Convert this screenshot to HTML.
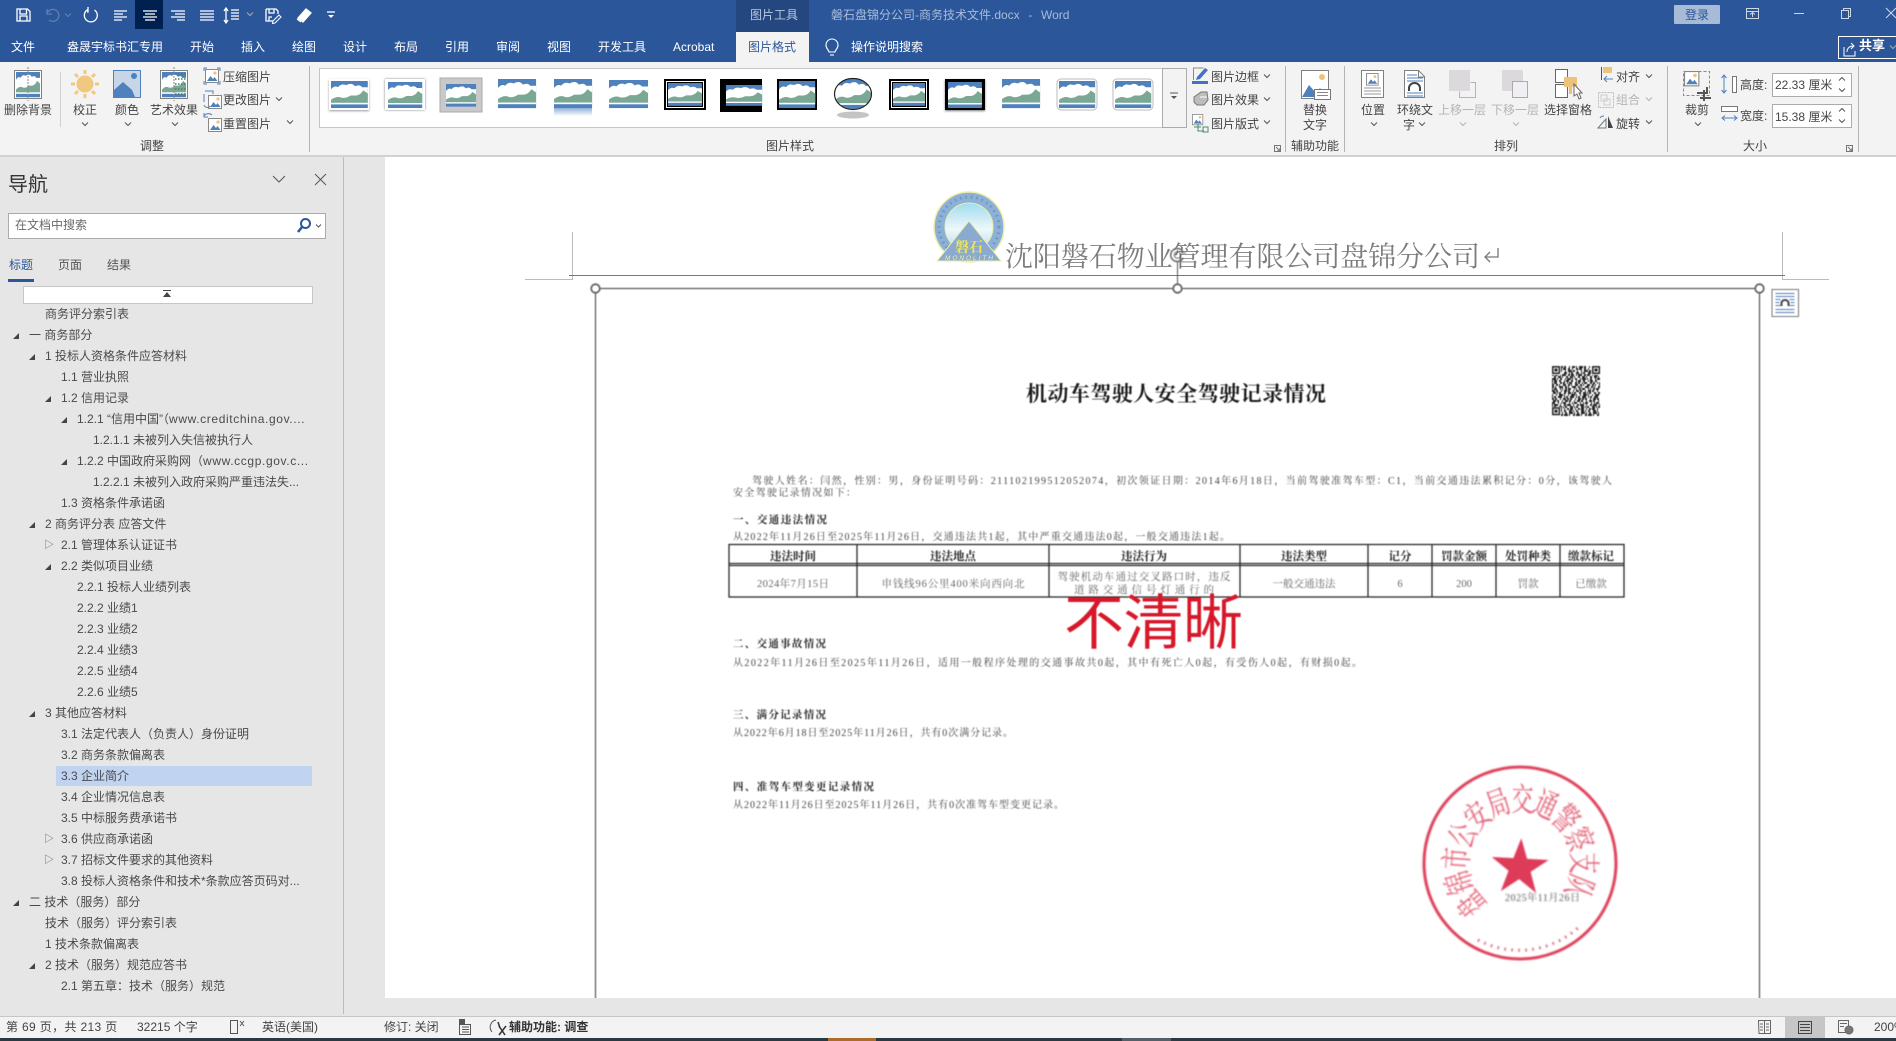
<!DOCTYPE html>
<html lang="zh-CN"><head><meta charset="utf-8"><title>磐石盘锦分公司-商务技术文件.docx - Word</title>
<style>
html,body{margin:0;padding:0;width:1896px;height:1041px;overflow:hidden;background:#e6e6e6}
body{position:relative;font:12px/16px "Liberation Sans","Noto Sans CJK SC",sans-serif;color:#444}
.a,.t{position:absolute}
.t{white-space:nowrap}
.w{color:#fff}.g{color:#b4b4b4}
svg{position:absolute;left:0;top:0;overflow:hidden}
#tree{position:absolute;left:0;top:306px;width:340px}
.r{position:relative;height:21px;line-height:16px;white-space:nowrap;color:#4a4a4a}
.r i{font-style:normal;letter-spacing:.62px}
.r.c:before{content:"";position:absolute;top:6px;margin-left:-16px;width:0;height:0;border-style:solid;border-width:0 0 6px 6px;border-color:transparent transparent #444 transparent}
.r.o:before{content:"▷";position:absolute;margin-left:-17px;top:1px;font-size:10px;color:#666}
</style></head><body>
<svg width="0" height="0" style="position:absolute"><defs>
<g id="th"><rect width="32" height="26" fill="#4f81bd"/><path d="M0 8Q3 4 6 6Q9 2 13 4Q18 1 21 5Q25 3 27 6L32 6V21H0Z" fill="#fff"/><path d="M0 21V18Q5 14 9 16Q13 17 17 14L22 14Q26 13 28 9L32 12V21Z" fill="#7aa895"/><rect y="21" width="32" height="1.5" fill="#fff"/></g>
<g id="ch"><path d="M-3-1.5l3 3 3-3" fill="none" stroke="#555" stroke-width="1"/></g>
<g id="pic"><rect x=".5" y=".5" width="13" height="13" fill="#fff" stroke="#888"/><path d="M2 12l3.5-5 2.5 3 1.5-2 3 4z" fill="#4f81bd"/><circle cx="10" cy="4" r="1.6" fill="#edc27a"/></g>
<g id="sp"><path d="M-3 1.5l3-3 3 3" fill="none" stroke="#555"/><path d="M-3 9.5l3 3 3-3" fill="none" stroke="#555"/></g>
<linearGradient id="refl" x1="0" y1="0" x2="0" y2="1"><stop offset="0" stop-color="#8fb0d6"/><stop offset="1" stop-color="#fff"/></linearGradient>
</defs></svg>

<header>
<div class="a" style="left:0;top:0;width:1896px;height:62px;background:#2b579a"></div>
<div class="a" style="left:135px;top:0;width:28px;height:29px;background:#002050"></div>
<div class="a" style="left:736px;top:0;width:73px;height:32px;background:#24477f"></div>
<div class="a" style="left:736px;top:32px;width:73px;height:30px;background:#f3f3f3"></div>
<div class="a" style="left:0;top:62px;width:1896px;height:93px;background:#f3f3f3;border-bottom:2px solid #d2d2d2"></div>
<span class="t" style="left:750px;top:7px;color:#b9c8de">图片工具</span>
<span class="t" style="left:831px;top:7px;color:#a9bcd9;word-spacing:1px">磐石盘锦分公司-商务技术文件.docx &nbsp;-&nbsp; Word</span>
<span class="t" style="left:1674px;top:5px;width:46px;height:19px;background:#a7bad6;border-radius:1px;text-align:center;line-height:20px;color:#2b579a">登录</span>

<span class="t w" style="left:11px;top:39px">文件</span><span class="t w" style="left:67px;top:39px">盎晟宇标书汇专用</span><span class="t w" style="left:190px;top:39px">开始</span><span class="t w" style="left:241px;top:39px">插入</span><span class="t w" style="left:292px;top:39px">绘图</span><span class="t w" style="left:343px;top:39px">设计</span><span class="t w" style="left:394px;top:39px">布局</span><span class="t w" style="left:445px;top:39px">引用</span><span class="t w" style="left:496px;top:39px">审阅</span><span class="t w" style="left:547px;top:39px">视图</span><span class="t w" style="left:598px;top:39px">开发工具</span><span class="t w" style="left:673px;top:39px">Acrobat</span>
<span class="t" style="left:748px;top:39px;color:#2b579a">图片格式</span>
<span class="t w" style="left:851px;top:39px">操作说明搜索</span>
<div class="a" style="left:1838px;top:36px;width:60px;height:21px;border:1px solid #fff"></div>
<span class="t w" style="left:1859px;top:38px;font-size:13px;font-weight:bold">共享</span>

<!-- gallery frame -->
<div class="a" style="left:319px;top:68px;width:843px;height:58px;background:#fff;border:1px solid #c6c6c6;border-right:0"></div>
<div class="a" style="left:1162px;top:68px;width:23px;height:58px;background:#f3f3f3;border:1px solid #ababab"></div>

<!-- ribbon labels -->
<div class="a" style="left:0;top:1px">
<span class="t" style="left:4px;top:101px">删除背景</span><span class="t" style="left:73px;top:101px">校正</span><span class="t" style="left:115px;top:101px">颜色</span><span class="t" style="left:150px;top:101px">艺术效果</span>
<span class="t" style="left:223px;top:68px">压缩图片</span><span class="t" style="left:223px;top:91px">更改图片</span><span class="t" style="left:223px;top:115px">重置图片</span>
<span class="t" style="left:140px;top:137px">调整</span>
<span class="t" style="left:766px;top:137px">图片样式</span>
<span class="t" style="left:1211px;top:68px">图片边框</span><span class="t" style="left:1211px;top:91px">图片效果</span><span class="t" style="left:1211px;top:115px">图片版式</span>
<span class="t" style="left:1303px;top:101px">替换</span><span class="t" style="left:1303px;top:116px">文字</span><span class="t" style="left:1291px;top:137px">辅助功能</span>
<span class="t" style="left:1361px;top:101px">位置</span><span class="t" style="left:1397px;top:101px">环绕文</span><span class="t" style="left:1403px;top:116px">字</span>
<span class="t g" style="left:1438px;top:101px">上移一层</span><span class="t g" style="left:1491px;top:101px">下移一层</span><span class="t" style="left:1544px;top:101px">选择窗格</span>
<span class="t" style="left:1616px;top:68px">对齐</span><span class="t g" style="left:1616px;top:91px">组合</span><span class="t" style="left:1616px;top:115px">旋转</span>
<span class="t" style="left:1494px;top:137px">排列</span>
<span class="t" style="left:1685px;top:101px">裁剪</span>
<span class="t" style="left:1740px;top:76px">高度:</span><span class="t" style="left:1740px;top:107px">宽度:</span>
<span class="t" style="left:1743px;top:137px">大小</span>
</div>
<div class="a" style="left:1772px;top:73px;width:78px;height:22px;background:#fff;border:1px solid #ababab"></div>
<div class="a" style="left:1772px;top:104px;width:78px;height:22px;background:#fff;border:1px solid #ababab"></div>
<span class="t" style="left:1775px;top:77px;color:#444">22.33 厘米</span><span class="t" style="left:1775px;top:109px;color:#444">15.38 厘米</span>

<svg width="1896" height="158" viewBox="0 0 1896 158">
<!-- QAT -->
<g fill="none" stroke="#fff" stroke-width="1.3">
<path d="M17 9h10.5l2.5 2.5V21H17zM20 9v5h6.500V9M20 21v-5h7v5"/>
<path d="M47 9v5h5M47 14a6 6 0 1 1 2 6" stroke="#5f80b3"/>
<path d="M94.500 10a6.500 6.500 0 1 1-6.500-.5M88 7v5h-1" />
<path d="M114 11h13M114 14h9M114 17h13M114 20h8M143 11h14M145 14h10M143 17h14M145 20h10M171 11h14M175 14h10M171 17h14M177 20h8M200 11h14M200 14h14M200 17h14M200 20h14M226 9v13M224 11l2-3 2 3M224 20l2 3 2-3M231 10h8M231 13h8M231 16h8M231 19h8"/>
<path d="M266 9h10l2 2v3M266 9v12h7M269 9v4h5V9M269 21v-4h3"/><path d="M273 21l6-6 2 2-6 6-2.500.500z" stroke-width="1"/>
<path d="M298 18l8-9 5 4-8 9z" fill="#fff"/><path d="M297 19l4 3" />
<path d="M327 12h8" /></g>
<path d="M328 15h6l-3 3z" fill="#fff"/>
<use href="#ch" x="68" y="15" opacity=".5" style="filter:invert(1)"/>
<use href="#ch" x="250" y="14" style="filter:invert(1)"/>
<!-- window controls -->
<g fill="none" stroke="#cdd7e6" stroke-width="1"><path d="M1746.500 8.500h12v10h-12zM1746.500 11.500h12M1752.500 17v-4M1750 14.500l2.500-2 2.500 2"/><path d="M1794 13.500h10"/><path d="M1841.500 10.500h7v8h-7zM1843.500 10V8.500h7v8h-2"/><path d="M1886 8l10 10M1896 8l-10 10"/></g>
<g fill="none" stroke="#fff" stroke-width="1"><path d="M1844 47v9h11v-5M1847 52c0-4 3-6 6-6M1851 43l3 3-3 3"/></g><use href="#ch" x="1893" y="47" style="filter:invert(1)"/>
<!-- lightbulb -->
<g fill="none" stroke="#fff" stroke-width="1.100"><path d="M829 52c0-2-3-3-3-7a6 6 0 0 1 12 0c0 4-3 5-3 7z"/><path d="M830 55h4"/></g>
<!-- separators -->
<path d="M60.500 72v55" stroke="#d0d0d0"/><path d="M309.500 66v86M1285.500 66v86M1344.500 66v86M1667.500 66v86M1858.500 66v86" stroke="#b4b4b4"/>
<!-- 删除背景 -->
<rect x="14.500" y="70.500" width="27" height="28" fill="#fff" stroke="#808080"/><use href="#th" transform="translate(16 72) scale(.75 .97)"/><path d="M28 67v34" stroke="#888" stroke-dasharray="2 1"/>
<!-- 校正 -->
<circle cx="85" cy="84" r="8.500" fill="#f0c87f"/><g stroke="#f0c87f" stroke-width="3"><path d="M85 70v4M85 94v4M71 84h4M95 84h4M75 74l3 3M92 91l3 3M95 74l-3 3M78 91l-3 3"/></g>
<!-- 颜色 -->
<rect x="113.500" y="70.500" width="27" height="27" fill="#c6d6e8" stroke="#4f81bd"/><path d="M114 97V90l9-8 9 8 3 7z" fill="#4f81bd"/><circle cx="134" cy="76" r="3" fill="#4f81bd"/>
<!-- 艺术效果 -->
<rect x="160.500" y="70.500" width="27" height="28" fill="#fff" stroke="#808080"/><use href="#th" transform="translate(162 72) scale(.75 .97)"/><g stroke="#4a7c64" stroke-width="1.500" stroke-dasharray="1.500 1.500"><path d="M175 74h11M175 79h11M175 84h11M175 89h11M175 94h11"/></g><path d="M174 67v34" stroke="#888" stroke-dasharray="2 1"/>
<!-- small col -->
<use href="#pic" x="205" y="69"/><g stroke="#4f81bd" fill="none"><path d="M204 71v-3h3M217 68h3v3M204 81v3h3M220 81v3h-3"/></g>
<use href="#pic" x="208" y="95"/><path d="M205 91h8v3M204 94v8M204 105c1 3 5 3 6 1" fill="none" stroke="#4f81bd"/>
<use href="#pic" x="208" y="118"/><path d="M204 116c2-3 6-3 8-1M204 113v4h4" fill="none" stroke="#4f81bd"/>
<use href="#ch" x="279" y="99"/><use href="#ch" x="290" y="122"/><use href="#ch" x="85" y="124"/><use href="#ch" x="128" y="124"/><use href="#ch" x="175" y="124"/>
<!-- gallery -->
<g>
<rect x="329" y="79" width="40" height="31" fill="#fff" style="filter:drop-shadow(0 1px 1px #999)"/><use href="#th" transform="translate(331 81) scale(1.150 1.040)"/>
<rect x="385" y="79" width="40" height="31" fill="#fff" style="filter:drop-shadow(0 0 1px #777)"/><use href="#th" transform="translate(388 82) scale(1.070 1)"/>
<rect x="440" y="78" width="42" height="34" fill="#c9c9c9" stroke="#aaa"/><use href="#th" transform="translate(446 84) scale(.94 .87)"/>
<use href="#th" transform="translate(498 79) scale(1.190 1.120)"/>
<use href="#th" transform="translate(554 79) scale(1.190 1.120)"/><rect x="554" y="108" width="38" height="8" fill="url(#refl)"/>
<use href="#th" transform="translate(609 80) scale(1.220 1.080)"/>
<rect x="664" y="79" width="42" height="31" fill="#000"/><rect x="666" y="81" width="38" height="27" fill="#fff"/><rect x="667" y="82" width="36" height="25" fill="#000"/><use href="#th" transform="translate(668 83) scale(1.060 .88)"/>
<rect x="720" y="79" width="42" height="33" fill="#000"/><use href="#th" transform="translate(726 85) scale(1.130 .8)"/>
<rect x="777" y="79" width="40" height="31" fill="#000"/><use href="#th" transform="translate(779 81) scale(1.130 1.040)"/>
<use href="#th" transform="translate(835 79) scale(1.130 1.150)"/>
<path d="M833 78h40v31h-40zM835 94a18 15 0 0 0 36 0a18 15 0 0 0-36 0z" fill="#fff" fill-rule="evenodd"/><ellipse cx="853" cy="94" rx="18.500" ry="15.500" fill="none" stroke="#222" stroke-width="1.200"/>
<ellipse cx="853" cy="115" rx="16" ry="3.500" fill="#c4c4c4"/>
<rect x="889" y="79" width="40" height="31" fill="#000"/><rect x="891" y="81" width="36" height="27" fill="#fff"/><rect x="892" y="82" width="34" height="25" fill="#000"/><use href="#th" transform="translate(893 83) scale(1 .88)"/>
<rect x="945" y="79" width="40" height="31" fill="#000" style="filter:drop-shadow(0 1px 1px #777)"/><use href="#th" transform="translate(948 82) scale(1.060 1)"/>
<use href="#th" transform="translate(1002 79) scale(1.190 1.120)"/>
<rect x="1057" y="79" width="40" height="31" rx="4" fill="#fff" stroke="#bbb"/><use href="#th" transform="translate(1059 81) scale(1.130 1.040)"/>
<rect x="1113" y="79" width="40" height="31" rx="4" fill="#fff" stroke="#bbb"/><use href="#th" transform="translate(1115 81) scale(1.130 1.040)"/>
</g>
<path d="M1170 93h8" stroke="#555"/><path d="M1171 96h6l-3 3z" fill="#555"/>
<!-- 图片边框/效果/版式 -->
<path d="M1193.500 80v-12h10" fill="none" stroke="#888"/><path d="M1197 77l8-9 3 2-8 9-4 1z" fill="#4472c4"/><rect x="1192" y="81" width="16" height="3" fill="#4472c4"/>
<path d="M1194 97l7-5h6l1 8-4 5h-7l-3-3z" fill="#bdbdbd" stroke="#777"/><path d="M1200 97h7" stroke="#fff"/>
<use href="#pic" transform="translate(1192 114) scale(.8)"/><path d="M1194 127h7M1198 124v7h6M1203 127h5v5h-5z" fill="none" stroke="#4c8a72"/>
<use href="#ch" x="1267" y="76"/><use href="#ch" x="1267" y="99"/><use href="#ch" x="1267" y="122"/>
<!-- launchers -->
<g fill="none" stroke="#777"><path d="M1274.500 145.500h6v6h-6zM1276 147l4 4M1280 148v3h-3"/><path d="M1846.500 145.500h6v6h-6zM1848 147l4 4M1852 148v3h-3"/></g>
<!-- 替换文字 -->
<rect x="1301.500" y="70.500" width="27" height="28" fill="#fff" stroke="#808080"/><circle cx="1322" cy="77" r="3" fill="#edc27a"/><path d="M1302 97l7-12 7 8 4-5 7 9z" fill="#4f81bd"/><rect x="1314.500" y="89.500" width="16" height="10" fill="#fff" stroke="#777"/><path d="M1317 92.500h11M1317 95.500h11" stroke="#888"/>
<!-- 位置 -->
<rect x="1361.500" y="70.500" width="22" height="27" fill="#fff" stroke="#808080"/><use href="#pic" transform="translate(1366 73) scale(.9)"/><path d="M1364 88h17M1364 91h17M1364 94h17" stroke="#999"/>
<!-- 环绕文字 -->
<path d="M1404.500 70.500h14l6 6v21h-20z" fill="#fff" stroke="#808080"/><path d="M1418.500 71v6h6" fill="none" stroke="#808080"/><path d="M1407 75h10M1407 78h16M1407 81h16M1407 93h16M1407 96h16" stroke="#4f81bd"/><path d="M1409 91v-3a5.500 5 0 0 1 11 0v3" fill="none" stroke="#444" stroke-width="2"/>
<use href="#ch" x="1374" y="124"/><use href="#ch" x="1422" y="124"/>
<!-- 上下移 -->
<rect x="1449" y="70" width="21" height="21" fill="#dcd9dc"/><path d="M1470.500 82.500h5v15h-16v-6" fill="none" stroke="#b4b4b4"/>
<rect x="1502" y="70" width="21" height="21" fill="#dcd9dc"/><rect x="1512.500" y="81.500" width="15" height="16" fill="#f1eff3" stroke="#aaa"/>
<use href="#ch" x="1463" y="124" opacity=".4"/><use href="#ch" x="1516" y="124" opacity=".4"/>
<!-- 选择窗格 -->
<rect x="1555.500" y="69.500" width="12" height="13" fill="#fff" stroke="#666"/><rect x="1555.500" y="84.500" width="12" height="13" fill="#fff" stroke="#666"/><path d="M1564 77h13v10h-5v7h-3v-7h-5z" fill="#edc27a"/><path d="M1574 84v12l3-2 2 5 2-1-2-5h3z" fill="#fff" stroke="#666"/>
<!-- 对齐 组合 旋转 -->
<path d="M1601.500 67v13" stroke="#555"/><rect x="1603" y="67" width="9" height="6" fill="#edc27a"/><path d="M1613 79h-8M1607 76l-3 3 3 3" fill="none" stroke="#4f81bd"/>
<g fill="none" stroke="#bbb" stroke-dasharray="2 1"><rect x="1598.500" y="92.500" width="15" height="15"/></g><rect x="1601" y="95" width="6" height="6" fill="none" stroke="#ccc"/><rect x="1604" y="99" width="6" height="6" fill="none" stroke="#ccc"/>
<path d="M1598 128l8-9v9z" fill="none" stroke="#777"/><path d="M1608 128v-12l5 12z" fill="#444"/><path d="M1600 118c1-2 3-2 4-2" fill="none" stroke="#4f81bd"/>
<use href="#ch" x="1649" y="76"/><use href="#ch" x="1649" y="99" opacity=".4"/><use href="#ch" x="1649" y="122"/>
<!-- 裁剪 -->
<rect x="1683.500" y="71.500" width="26" height="24" fill="none" stroke="#888" stroke-dasharray="3 2"/><use href="#pic" transform="translate(1684 71) scale(1.100)"/><path d="M1700 98h11M1704 90v11M1697 93h10v-6" fill="none" stroke="#555" stroke-width="2"/>
<use href="#ch" x="1698" y="124"/>
<!-- 高度宽度 -->
<rect x="1732.500" y="76.500" width="4" height="16" fill="#fff" stroke="#777"/><path d="M1724 76v16M1721.500 78l2.500-3 2.500 3M1721.500 90l2.500 3 2.500-3" fill="none" stroke="#4f81bd"/>
<path d="M1721.500 106.500h16v5h-16z" fill="#fff" stroke="#777"/><path d="M1723 118h13M1725 115.500l-3 2.500 3 2.500M1734 115.500l3 2.500-3 2.500" fill="none" stroke="#4f81bd"/>
<use href="#sp" x="1842" y="79"/><use href="#sp" x="1842" y="110"/>
</svg>
</header>

<nav>
<div class="a" style="left:343px;top:157px;width:1px;height:857px;background:#bcbcbc"></div>
<span class="t" style="left:8px;top:171px;font-size:20px;line-height:28px;color:#333">导航</span>
<svg style="left:260px;top:170px" width="80" height="22"><path d="M13 6l6 6 6-6M55 4l11 11M66 4L55 15" fill="none" stroke="#555"/></svg>
<div class="a" style="left:8px;top:213px;width:316px;height:24px;background:#fff;border:1px solid #ababab"></div>
<span class="t" style="left:15px;top:217px;color:#6a6a6a">在文档中搜索</span>
<svg style="left:296px;top:216px" width="30" height="20"><circle cx="9.500" cy="7.500" r="4.500" fill="none" stroke="#2b579a" stroke-width="2"/><path d="M6 11l-4 5" stroke="#2b579a" stroke-width="2.500"/><path d="M20 8.500l2.500 2.500 2.500-2.500" fill="none" stroke="#555"/></svg>
<span class="t" style="left:9px;top:257px;color:#2b579a">标题</span><span class="t" style="left:58px;top:257px;color:#555">页面</span><span class="t" style="left:107px;top:257px;color:#555">结果</span>
<div class="a" style="left:8px;top:279px;width:26px;height:3px;background:#2b579a"></div>
<div class="a" style="left:23px;top:286px;width:288px;height:16px;background:#fff;border:1px solid #c6c6c6"></div>
<svg style="left:163px;top:290px" width="9" height="9"><path d="M0 .5h8" stroke="#444"/><path d="M4 2L0 7h8z" fill="#444"/></svg>
<div class="a" style="left:56px;top:766px;width:256px;height:20px;background:#c0d4f1"></div>
<div id="tree">
<div class="r" style="padding-left:45px">商务评分索引表</div>
<div class="r c" style="padding-left:29px">一 商务部分</div>
<div class="r c" style="padding-left:45px">1 投标人资格条件应答材料</div>
<div class="r" style="padding-left:61px">1.1 营业执照</div>
<div class="r c" style="padding-left:61px">1.2 信用记录</div>
<div class="r c" style="padding-left:77px">1.2.1 “信用中国”（<i>www.creditchina.gov....</i></div>
<div class="r" style="padding-left:93px">1.2.1.1 未被列入失信被执行人</div>
<div class="r c" style="padding-left:77px">1.2.2 中国政府采购网（<i>www.ccgp.gov.c...</i></div>
<div class="r" style="padding-left:93px">1.2.2.1 未被列入政府采购严重违法失...</div>
<div class="r" style="padding-left:61px">1.3 资格条件承诺函</div>
<div class="r c" style="padding-left:45px">2 商务评分表 应答文件</div>
<div class="r o" style="padding-left:61px">2.1 管理体系认证证书</div>
<div class="r c" style="padding-left:61px">2.2 类似项目业绩</div>
<div class="r" style="padding-left:77px">2.2.1 投标人业绩列表</div>
<div class="r" style="padding-left:77px">2.2.2 业绩1</div>
<div class="r" style="padding-left:77px">2.2.3 业绩2</div>
<div class="r" style="padding-left:77px">2.2.4 业绩3</div>
<div class="r" style="padding-left:77px">2.2.5 业绩4</div>
<div class="r" style="padding-left:77px">2.2.6 业绩5</div>
<div class="r c" style="padding-left:45px">3 其他应答材料</div>
<div class="r" style="padding-left:61px">3.1 法定代表人（负责人）身份证明</div>
<div class="r" style="padding-left:61px">3.2 商务条款偏离表</div>
<div class="r" style="padding-left:61px">3.3 企业简介</div>
<div class="r" style="padding-left:61px">3.4 企业情况信息表</div>
<div class="r" style="padding-left:61px">3.5 中标服务费承诺书</div>
<div class="r o" style="padding-left:61px">3.6 供应商承诺函</div>
<div class="r o" style="padding-left:61px">3.7 招标文件要求的其他资料</div>
<div class="r" style="padding-left:61px">3.8 投标人资格条件和技术*条款应答页码对...</div>
<div class="r c" style="padding-left:29px">二 技术（服务）部分</div>
<div class="r" style="padding-left:45px">技术（服务）评分索引表</div>
<div class="r" style="padding-left:45px">1 技术条款偏离表</div>
<div class="r c" style="padding-left:45px">2 技术（服务）规范应答书</div>
<div class="r" style="padding-left:61px">2.1 第五章：技术（服务）规范</div>
</div>
</nav>

<main class="a" style="left:385px;top:157px;width:1511px;height:841px;background:#fff;overflow:hidden">
<svg width="1511" height="841" viewBox="385 157 1511 841" style="font-family:'Liberation Serif','Noto Serif CJK SC',serif">
<defs>
<linearGradient id="sky" x1="0" y1="0" x2="0" y2="1"><stop offset="0" stop-color="#9fdcef"/><stop offset=".55" stop-color="#eef8fb"/><stop offset="1" stop-color="#b7d8ee"/></linearGradient>
</defs>
<!-- crop marks -->
<path d="M572.500 232v47.500H525M1782.500 232v47.500H1829" fill="none" stroke="#bbb"/>
<path d="M569 275.500H1785" stroke="#777"/>
<!-- logo -->
<g style="filter:blur(.3px)">
<circle cx="969" cy="227" r="35" fill="#8cb0d6" stroke="#f2efa6" stroke-width="1.500"/>
<circle cx="969" cy="227" r="24" fill="url(#sky)" stroke="#e8eeb0"/>
<circle cx="969" cy="227" r="30" fill="none" stroke="#6f94c0" stroke-width="3" stroke-dasharray="1.500 4"/>
<path d="M969 221l32 40h-64z" fill="#8aaad0" stroke="#f2efa6"/>
<text x="969" y="252" text-anchor="middle" font-size="14" font-weight="bold" fill="#f4e84e">磐石</text>
<text x="969" y="260" text-anchor="middle" font-size="6.500" fill="#f2efa6" font-family="Liberation Sans" font-style="italic" textLength="48">MONOLITH</text>
</g>
<text x="1005" y="266" font-size="28" fill="#7d7d7d" textLength="475">沈阳磐石物业管理有限公司盘锦分公司</text>
<path d="M1498 248v9h-13M1490 252l-5 5 5 5" fill="none" stroke="#777" stroke-width="1.300"/>
<!-- image content -->
<g style="filter:blur(.4px)" fill="#444">
<text x="1026" y="401" font-size="21" font-weight="bold" fill="#1a1a1a" textLength="300">机动车驾驶人安全驾驶记录情况</text>
<text x="752" y="484" font-size="10" textLength="860">驾驶人姓名：闫然，性别：男，身份证明号码：211102199512052074，初次领证日期：2014年6月18日，当前驾驶准驾车型：C1，当前交通违法累积记分：0分，该驾驶人</text>
<text x="733" y="496" font-size="10" textLength="123">安全驾驶记录情况如下：</text>
<text x="733" y="523" font-size="10.500" font-weight="bold" fill="#222" textLength="94">一、交通违法情况</text>
<text x="733" y="540" font-size="10" textLength="497">从2022年11月26日至2025年11月26日，交通违法共1起，其中严重交通违法0起，一般交通违法1起。</text>
<g fill="none" stroke="#2a2a2a" stroke-width="1.300"><rect x="729" y="544.500" width="895" height="52.500"/><path d="M729 563.500h895M729 565.500h895M857 544v53M1049 544v53M1240 544v53M1368 544v53M1432 544v53M1496 544v53M1560 544v53"/></g>
<g font-size="11.500" font-weight="bold" fill="#222" text-anchor="middle"><text x="793" y="560">违法时间</text><text x="953" y="560">违法地点</text><text x="1144" y="560">违法行为</text><text x="1304" y="560">违法类型</text><text x="1400" y="560">记分</text><text x="1464" y="560">罚款金额</text><text x="1528" y="560">处罚种类</text><text x="1591" y="560">缴款标记</text></g>
<g font-size="10.500" text-anchor="middle" fill="#666"><text x="793" y="587" textLength="72">2024年7月15日</text><text x="953" y="587" textLength="143">申钱线96公里400米向西向北</text><text x="1144" y="580" textLength="173">驾驶机动车通过交叉路口时，违反</text><text x="1144" y="593" textLength="140">道路交通信号灯通行的</text><text x="1304" y="587">一般交通违法</text><text x="1400" y="587">6</text><text x="1464" y="587">200</text><text x="1528" y="587">罚款</text><text x="1591" y="587">已缴款</text></g>
<text x="733" y="647" font-size="10.500" font-weight="bold" fill="#222" textLength="93">二、交通事故情况</text>
<text x="733" y="666" font-size="10" textLength="629">从2022年11月26日至2025年11月26日，适用一般程序处理的交通事故共0起，其中有死亡人0起，有受伤人0起，有财损0起。</text>
<text x="733" y="718" font-size="10.500" font-weight="bold" fill="#222" textLength="93">三、满分记录情况</text>
<text x="733" y="736" font-size="10" textLength="280">从2022年6月18日至2025年11月26日，共有0次满分记录。</text>
<text x="733" y="790" font-size="10.500" font-weight="bold" fill="#222" textLength="141">四、准驾车型变更记录情况</text>
<text x="733" y="808" font-size="10" textLength="331">从2022年11月26日至2025年11月26日，共有0次准驾车型变更记录。</text>
<!-- QR -->
<g transform="translate(1552 366)" stroke="#222" stroke-width="2" fill="none">
<path d="M0 1H48" stroke-dasharray="3 1 1 2 4 1 2 3 1 2"/><path d="M0 3H48" stroke-dasharray="2 2 1 3 2 1 3 2"/><path d="M0 5H48" stroke-dasharray="1 2 4 1 2 2 1 3" stroke-dashoffset="3"/><path d="M0 7H48" stroke-dasharray="3 2 1 1 2 3"/><path d="M0 9H48" stroke-dasharray="2 1 3 2 1 1 4 2"/><path d="M0 11H48" stroke-dasharray="1 3 2 2 3 1" stroke-dashoffset="2"/><path d="M0 13H48" stroke-dasharray="4 1 1 2 2 3 1 1"/><path d="M0 15H48" stroke-dasharray="2 3 1 1 3 2" stroke-dashoffset="5"/><path d="M0 17H48" stroke-dasharray="1 1 3 3 2 1 2 2"/><path d="M0 19H48" stroke-dasharray="3 2 2 1 1 3" stroke-dashoffset="1"/><path d="M0 21H48" stroke-dasharray="2 1 1 3 4 2"/><path d="M0 23H48" stroke-dasharray="1 2 2 1 3 3 1 1" stroke-dashoffset="4"/><path d="M0 25H48" stroke-dasharray="3 1 2 3 1 2"/><path d="M0 27H48" stroke-dasharray="2 2 3 1 1 1 2 3" stroke-dashoffset="3"/><path d="M0 29H48" stroke-dasharray="1 3 1 2 4 1"/><path d="M0 31H48" stroke-dasharray="4 2 1 1 2 2" stroke-dashoffset="6"/><path d="M0 33H48" stroke-dasharray="2 1 2 3 1 2 3 1"/><path d="M0 35H48" stroke-dasharray="1 2 3 1 2 3" stroke-dashoffset="2"/><path d="M0 37H48" stroke-dasharray="3 3 1 2 1 1"/><path d="M0 39H48" stroke-dasharray="2 1 4 2 1 3" stroke-dashoffset="1"/><path d="M0 41H48" stroke-dasharray="1 1 2 3 3 1"/><path d="M0 43H48" stroke-dasharray="3 2 1 2 2 1" stroke-dashoffset="4"/><path d="M0 45H48" stroke-dasharray="2 3 3 1 1 2"/><path d="M0 47H48" stroke-dasharray="1 2 2 2 4 1" stroke-dashoffset="2"/><path d="M0 49H48" stroke-dasharray="4 1 1 3 2 1"/>
<g stroke="none"><rect width="9" height="9" fill="#fff"/><rect x="39" width="9" height="9" fill="#fff"/><rect y="41" width="9" height="9" fill="#fff"/></g>
<g stroke-width="1.500"><rect x=".8" y=".8" width="6.500" height="6.500"/><rect x="40.800" y=".8" width="6.500" height="6.500"/><rect x=".8" y="42" width="6.500" height="6.500"/></g>
<g fill="#222" stroke="none"><rect x="2.500" y="2.500" width="3" height="3"/><rect x="42.500" y="2.500" width="3" height="3"/><rect x="2.500" y="43.700" width="3" height="3"/></g>
</g>
<!-- stamp -->
<g style="filter:blur(.55px)">
<circle cx="1520" cy="863" r="96" fill="none" stroke="#de3f59" stroke-width="3"/>
<path d="M1520 836l7.500 22h23.500l-19 14 7.200 22.500-19.200-14-19.200 14 7.200-22.500-19-14h23.500z" fill="#dd3b57" transform="rotate(3 1520 863) translate(1520 864) scale(.92) translate(-1520 -864)"/>
<g font-size="22" fill="#e35c72" text-anchor="middle" font-family="'Noto Serif CJK SC',serif">
<text transform="translate(1520 863) rotate(-130) translate(0 -52) scale(1 1.5)">盘</text>
<text transform="translate(1520 863) rotate(-108) translate(0 -52) scale(1 1.5)">锦</text>
<text transform="translate(1520 863) rotate(-86) translate(0 -52) scale(1 1.5)">市</text>
<text transform="translate(1520 863) rotate(-64) translate(0 -52) scale(1 1.5)">公</text>
<text transform="translate(1520 863) rotate(-42) translate(0 -52) scale(1 1.5)">安</text>
<text transform="translate(1520 863) rotate(-20) translate(0 -52) scale(1 1.5)">局</text>
<text transform="translate(1520 863) rotate(2) translate(0 -52) scale(1 1.5)">交</text>
<text transform="translate(1520 863) rotate(24) translate(0 -52) scale(1 1.5)">通</text>
<text transform="translate(1520 863) rotate(46) translate(0 -52) scale(1 1.5)">警</text>
<text transform="translate(1520 863) rotate(68) translate(0 -52) scale(1 1.5)">察</text>
<text transform="translate(1520 863) rotate(90) translate(0 -52) scale(1 1.5)">支</text>
<text transform="translate(1520 863) rotate(112) translate(0 -52) scale(1 1.5)">队</text>
</g>
<path d="M1478 940A88 88 0 0 0 1581 925" fill="none" stroke="#e2526a" stroke-width="3" stroke-dasharray="1.500 5.500"/>
<text x="1505" y="901" font-size="10" fill="#555" textLength="75">2025年11月26日</text>
</g>
<!-- red overlay -->
<text x="1064" y="644" font-size="60" fill="#d7182a" font-family="'Liberation Sans','Noto Sans CJK SC',sans-serif" textLength="179">不清晰</text>
<!-- selection frame -->
<rect x="595.500" y="288.500" width="1164" height="800" fill="none" stroke="#555" stroke-width="1.200"/>
<path d="M1177.500 262v26" stroke="#555"/>
<g fill="#fff" stroke="#666" stroke-width="1.800"><circle cx="595.500" cy="288.500" r="4.300"/><circle cx="1177.500" cy="288.500" r="4.300"/><circle cx="1759.500" cy="288.500" r="4.300"/></g>
<path d="M1183 252a6.500 6.500 0 1 0 0 6" fill="none" stroke="#666" stroke-width="1.500"/><circle cx="1177.500" cy="255" r="3.300" fill="none" stroke="#666"/><path d="M1182 248v5h4" fill="none" stroke="#666"/>
<!-- layout options -->
<g transform="translate(-2.500 0)">
<rect x="1774.500" y="289.500" width="26.500" height="27" fill="#fff" stroke="#777"/>
<path d="M1778 293.500h19M1778 296.500h19M1778 299.500h5M1792 299.500h5M1778 302.500h4M1793 302.500h4M1778 305.500h5M1792 305.500h5M1778 309.500h19M1778 312.500h19" stroke="#4f81bd"/>
<path d="M1784 306v-3a3.500 3 0 0 1 7 0v3" fill="none" stroke="#444" stroke-width="2"/>
</g>
</svg>
</main>

<footer>
<div class="a" style="left:0;top:1016px;width:1896px;height:1px;background:#c6c6c6"></div>
<div class="a" style="left:0;top:1017px;width:1896px;height:21px;background:#f3f3f3"></div>
<div class="a" style="left:1785px;top:1017px;width:40px;height:21px;background:#c6c6c6"></div>
<div class="a" style="left:0;top:1038px;width:1896px;height:3px;background:#2a3a44"></div>
<div class="a" style="left:828px;top:1038px;width:48px;height:3px;background:#ac6c2c"></div>
<div class="a" style="left:1122px;top:1038px;width:49px;height:3px;background:#555f67"></div>
<span class="t" style="left:6px;top:1019px;letter-spacing:.35px">第 69 页，共 213 页</span>
<span class="t" style="left:137px;top:1019px">32215 个字</span>
<span class="t" style="left:262px;top:1019px">英语(美国)</span>
<span class="t" style="left:384px;top:1019px">修订: 关闭</span>
<span class="t" style="left:509px;top:1019px;font-weight:bold;color:#333">辅助功能: 调查</span>
<span class="t" style="left:1874px;top:1019px">200%</span>
<svg style="top:1017px" width="1896" height="21">
<g fill="none" stroke="#555"><path d="M230.500 3.500h7v13h-7zM237.500 3.500v13M240 4l4 5M244 4l-4 5"/><path d="M459.500 2.500h5v4h-5z" fill="#555"/><path d="M459.500 7.500h11v10h-11zM462 10h7M462 12.500h7M462 15h7"/><path d="M496 3c-5 1-8 7-4 12"/><path d="M498 5l2 6M499 9l6 9M506 9l-7 9" stroke="#333" stroke-width="1.500"/></g>
<g fill="none" stroke="#666"><path d="M1758.500 3.500h5.500l.5 1 .5-1h5.500v13h-11.500zM1764.500 4v13M1760 7h3M1760 10h3M1760 13h3M1766 7h3M1766 10h3M1766 13h3"/><path d="M1798.500 4.500h13v12h-13zM1800 7.500h10M1800 10.500h10M1800 13.500h10" stroke="#444"/><path d="M1838.500 3.500h10v12h-10zM1840 6.500h7M1840 9.500h4"/><circle cx="1849" cy="13" r="4" fill="#777"/></g>
</svg>
</footer>
</body></html>
